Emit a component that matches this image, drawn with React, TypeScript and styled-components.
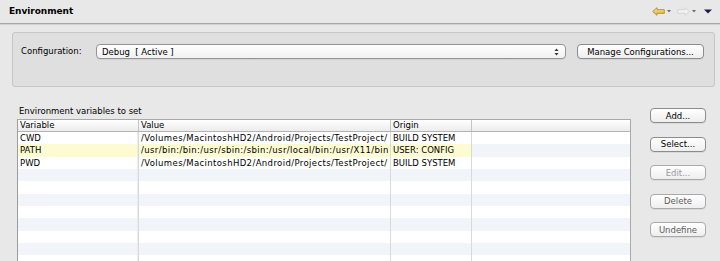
import React from "react";
import styled, { createGlobalStyle } from "styled-components";

const Global = createGlobalStyle`
  html, body { margin: 0; padding: 0; background: #e8e8e8; }
  body { font-family: "DejaVu Sans", "Liberation Sans", sans-serif; font-size: 8.5px; color: #000; }
  * { box-sizing: border-box; }
`;

const Page = styled.div`
  width: 720px;
  height: 261px;
  overflow: hidden;
  background: #e8e8e8;
  display: flex;
  flex-direction: column;
`;

const Header = styled.div`
  height: 24px;
  flex: none;
  display: flex;
  align-items: center;
  justify-content: space-between;
  padding: 0 8px 1px 9px;
  border-bottom: 1px solid #a7a7a7;
  box-shadow: 0 1px 0 #d2d2d2;
`;

const Title = styled.div`
  font-weight: bold;
  font-size: 9px;
  letter-spacing: -0.05px;
`;

const Tools = styled.div`
  display: flex;
  align-items: center;
  padding-top: 1px;
`;

const ToolIcon = styled.svg<{ $ml?: number }>`
  display: block;
  margin-left: ${(p) => p.$ml ?? 0}px;
`;

const GroupBox = styled.div`
  margin: 8px 5px 0 12px;
  height: 55px;
  flex: none;
  border: 1px solid #c6c6c6;
  border-radius: 3px;
  background: #dfdfdf;
  padding: 11px 10px 0 8px;
`;

const ConfigRow = styled.div`
  display: flex;
  align-items: center;
  gap: 11px;
  height: 15px;
`;

const Label = styled.div`
  width: 64px;
  flex: none;
  line-height: 15px;
`;

const Select = styled.div`
  width: 470px;
  height: 15px;
  flex: none;
  display: flex;
  align-items: center;
  justify-content: space-between;
  padding: 0 6px 0 5px;
  border: 1px solid #949494;
  border-radius: 4px;
  background: linear-gradient(#ffffff, #f1f1f1);
  box-shadow: 0 1px 0 rgba(0, 0, 0, 0.06);
  white-space: pre;
`;

const Button = styled.div<{ $tone?: "normal" | "dim" | "faint"; $width?: number }>`
  width: ${(p) => (p.$width ? `${p.$width}px` : "100%")};
  height: 15px;
  flex: none;
  display: flex;
  align-items: center;
  justify-content: center;
  border: 1px solid ${(p) => (p.$tone && p.$tone !== "normal" ? "#a9a9a9" : "#8c8c8c")};
  border-radius: 4px;
  background: linear-gradient(#ffffff, #eeeeee);
  box-shadow: 0 1px 0 rgba(0, 0, 0, 0.06);
  color: ${(p) => (p.$tone === "faint" ? "#9a9a9a" : p.$tone === "dim" ? "#5c5c5c" : "#000")};
  white-space: nowrap;
`;

const Section = styled.div`
  display: flex;
  margin-top: 18px;
  padding-left: 17px;
  flex: 1;
  min-height: 0;
`;

const LeftCol = styled.div`
  width: 614px;
  flex: none;
  display: flex;
  flex-direction: column;
`;

const SectionLabel = styled.div`
  height: 12px;
  line-height: 12px;
  padding-left: 2px;
  margin-bottom: 2px;
`;

const Table = styled.div`
  flex: 1;
  border-top: 1px solid #a9a9a9;
  border-left: 1px solid #9c9c9c;
  border-right: 1px solid #a9a9a9;
  background: #fff;
  overflow: hidden;
`;

const cols = "121px 252px 81px 1fr";

const HeadRow = styled.div`
  display: grid;
  grid-template-columns: ${cols};
  height: 12px;
  border-bottom: 1px solid #b3b3b3;
  background: linear-gradient(#ffffff, #ececec);
`;

const HeadCell = styled.div<{ $last?: boolean }>`
  padding-left: 2px;
  line-height: 11px;
  border-right: ${(p) => (p.$last ? "none" : "1px solid #c4c4c4")};
  overflow: hidden;
  white-space: nowrap;
`;

const Row = styled.div<{ $stripe: boolean }>`
  display: grid;
  grid-template-columns: ${cols};
  height: 12.333px;
  background: ${(p) => (p.$stripe ? "#f1f4f9" : "#ffffff")};
`;

const Cell = styled.div<{ $hl?: boolean; $last?: boolean; $double?: boolean; $wide?: boolean }>`
  padding-left: 2px;
  line-height: 12px;
  overflow: hidden;
  white-space: nowrap;
  letter-spacing: ${(p) => (p.$wide ? "0.38px" : "0")};
  background: ${(p) => (p.$hl ? "#fdfbd1" : "transparent")};
  border-right: ${(p) => (p.$last ? "none" : "1px solid #d9d9d9")};
  box-shadow: ${(p) => (p.$double ? "inset -1px 0 0 #ececec" : "none")};
`;

const RightCol = styled.div`
  width: 56px;
  margin-left: 19px;
  padding-top: 3px;
  display: flex;
  flex-direction: column;
  gap: 13.5px;
`;

type Env = { name: string; value: string; origin: string; hl?: boolean };

const vars: Env[] = [
  { name: "CWD", value: "/Volumes/MacintoshHD2/Android/Projects/TestProject/", origin: "BUILD SYSTEM" },
  { name: "PATH", value: "/usr/bin:/bin:/usr/sbin:/sbin:/usr/local/bin:/usr/X11/bin", origin: "USER: CONFIG", hl: true },
  { name: "PWD", value: "/Volumes/MacintoshHD2/Android/Projects/TestProject/", origin: "BUILD SYSTEM" },
];

const TOTAL_ROWS = 11;

const BackArrow = () => (
  <ToolIcon width="13" height="9" viewBox="0 0 13 9">
    <defs>
      <linearGradient id="gb" x1="0" y1="0" x2="0" y2="1">
        <stop offset="0" stopColor="#fbeaa0" />
        <stop offset="1" stopColor="#e0ad2a" />
      </linearGradient>
    </defs>
    <path d="M0.7 4.5 L5 0.7 L5 2.7 L12.3 2.7 L12.3 6.3 L5 6.3 L5 8.3 Z" fill="url(#gb)" stroke="#b08a28" strokeWidth="0.9" strokeLinejoin="round" />
  </ToolIcon>
);

const FwdArrow = () => (
  <ToolIcon width="13" height="9" viewBox="0 0 13 9" $ml={6}>
    <path d="M12.3 4.5 L8 0.7 L8 2.7 L0.7 2.7 L0.7 6.3 L8 6.3 L8 8.3 Z" fill="#f1f1f1" stroke="#d2d2d2" strokeWidth="0.9" strokeLinejoin="round" />
  </ToolIcon>
);

const SmallDrop = () => (
  <ToolIcon width="4" height="3" viewBox="0 0 4 3" $ml={2}>
    <path d="M0 0 L4 0 L2 2.5 Z" fill="#6a6a6a" />
  </ToolIcon>
);

const ViewMenu = () => (
  <ToolIcon width="8" height="5" viewBox="0 0 8 5" $ml={8}>
    <path d="M0 0.5 L8 0.5 L4 4.5 Z" fill="#1c1c4a" />
  </ToolIcon>
);

const UpDown = () => (
  <svg width="5" height="8" viewBox="0 0 5 8" style={{ display: "block" }}>
    <path d="M0.5 3 L2.5 0.5 L4.5 3 Z" fill="#333" />
    <path d="M0.5 5 L2.5 7.5 L4.5 5 Z" fill="#333" />
  </svg>
);

export default function App() {
  const rows = Array.from({ length: TOTAL_ROWS }, (_, i) => vars[i]);
  return (
    <Page>
      <Global />
      <Header>
        <Title>Environment</Title>
        <Tools>
          <BackArrow />
          <SmallDrop />
          <FwdArrow />
          <SmallDrop />
          <ViewMenu />
        </Tools>
      </Header>
      <GroupBox>
        <ConfigRow>
          <Label>Configuration:</Label>
          <Select>
            <span>Debug  [ Active ]</span>
            <UpDown />
          </Select>
          <Button $width={127}>Manage Configurations...</Button>
        </ConfigRow>
      </GroupBox>
      <Section>
        <LeftCol>
          <SectionLabel>Environment variables to set</SectionLabel>
          <Table>
            <HeadRow>
              <HeadCell>Variable</HeadCell>
              <HeadCell>Value</HeadCell>
              <HeadCell>Origin</HeadCell>
              <HeadCell $last />
            </HeadRow>
            {rows.map((r, i) => (
              <Row key={i} $stripe={i % 2 === 1}>
                <Cell $hl={r?.hl} $double>{r?.name ?? ""}</Cell>
                <Cell $hl={r?.hl} $wide>{r?.value ?? ""}</Cell>
                <Cell $hl={r?.hl}>{r?.origin ?? ""}</Cell>
                <Cell $last />
              </Row>
            ))}
          </Table>
        </LeftCol>
        <RightCol>
          <Button>Add...</Button>
          <Button>Select...</Button>
          <Button $tone="faint">Edit...</Button>
          <Button $tone="dim">Delete</Button>
          <Button $tone="dim">Undefine</Button>
        </RightCol>
      </Section>
    </Page>
  );
}
